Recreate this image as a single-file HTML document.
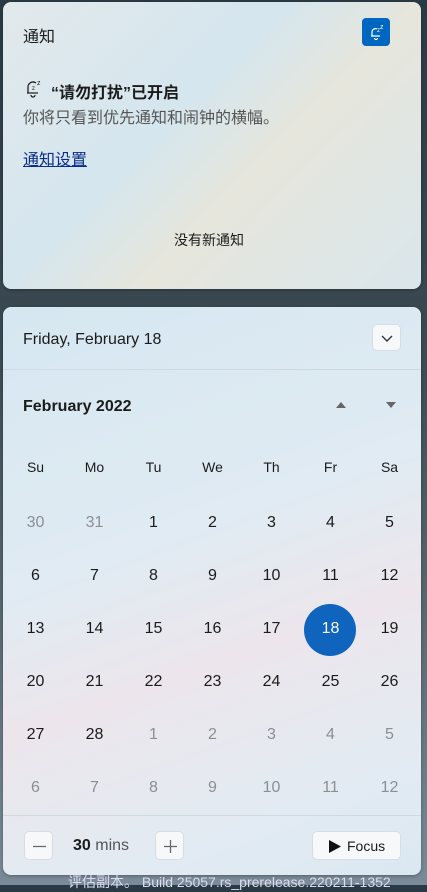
<!DOCTYPE html>
<html><head><meta charset="utf-8"><style>
*{margin:0;padding:0;box-sizing:border-box}
body{width:427px;height:885px;overflow:hidden;position:relative;font-family:"Liberation Sans","Noto Sans CJK SC",sans-serif;background:linear-gradient(180deg,#2a3a44 0%,#3c4a52 40%,#5a6a70 70%,#7a8a98 100%)}
.p{position:absolute;left:3px;width:418px;border-radius:8px;box-shadow:0 1px 3px rgba(0,0,0,.3)}
#n{top:2px;height:287px;background:linear-gradient(135deg,#e2e9ec 0%,#d5e6ee 40%,#e6e6dc 60%,#dae6ec 100%)}
#c{top:307px;height:568px;background:linear-gradient(160deg,#d6e7f1 0%,#e0ebf3 40%,#ece6ec 60%,#e2ebf3 85%,#dbe8f1 100%);overflow:hidden}
.t{position:absolute;white-space:nowrap}
.g{position:absolute;width:59px;text-align:center;font-size:16px;color:#1b1b1b}
.gray{color:#8a8f94}
.btn{position:absolute;background:#f6f8fa;border:1px solid #d8dde2;border-radius:5px}
</style></head><body>
<div class="p" id="n">
<div class="t" style="left:20px;top:21px;font-size:16px;color:#1b1b1b">通知</div>
<div style="position:absolute;left:359px;top:16px;width:28px;height:28px;background:#0067c0;border-radius:4px">
<svg width="28" height="28" viewBox="0 0 28 28"><path d="M9 18h9M10 18v-4a3.5 3.5 0 0 1 5-3M12.5 20a1.5 1.5 0 0 0 3 0" stroke="#fff" fill="none" stroke-width="1.2"/><text x="15" y="14" font-size="6" fill="#fff">z</text><text x="18" y="11" font-size="7" fill="#fff">z</text></svg></div>
<svg style="position:absolute;left:21px;top:75px" width="22" height="22" viewBox="0 0 22 22"><path d="M3 16h11M4 16v-6a5 5 0 0 1 8-4M7 18a2 2 0 0 0 4 0" stroke="#222" fill="none" stroke-width="1.3"/><text x="8" y="13" font-size="6" fill="#222">z</text><text x="13" y="8" font-size="7" fill="#222">z</text></svg>
<div class="t" style="left:48px;top:77px;font-size:16px;font-weight:bold;color:#1b1b1b">“请勿打扰”已开启</div>
<div class="t" style="left:20px;top:102px;font-size:16px;color:#555">你将只看到优先通知和闹钟的横幅。</div>
<div class="t" style="left:20px;top:144px;font-size:16px;color:#0a2c8c;text-decoration:underline">通知设置</div>
<div class="t" style="left:171px;top:228px;font-size:14px;color:#1b1b1b">没有新通知</div>
</div>
<div class="p" id="c">
<div class="t" style="left:20px;top:24px;font-size:16px;color:#1b1b1b">Friday, February 18</div>
<div class="btn" style="left:369px;top:17px;width:29px;height:27px"><svg width="29" height="27"><path d="M9 11l5 5 5-5" stroke="#333" fill="none" stroke-width="1.4"/></svg></div>
<div style="position:absolute;left:0;top:62px;width:418px;height:1px;background:#cfd9e0"></div>
<div class="t" style="left:20px;top:91px;font-size:16px;font-weight:bold;color:#1b1b1b">February 2022</div>
<svg style="position:absolute;left:332px;top:93px" width="12" height="10"><path d="M1 8L6 2L11 8Z" fill="#666"/></svg>
<svg style="position:absolute;left:382px;top:93px" width="12" height="10"><path d="M1 2L6 8L11 2Z" fill="#666"/></svg>
<div id="grid"></div>
<div style="position:absolute;left:0;top:508px;width:418px;height:1px;background:#cfd9e0"></div>
<div class="btn" style="left:21px;top:524px;width:29px;height:29px"><svg width="29" height="29"><path d="M8 14.5h13" stroke="#666" stroke-width="1.3"/></svg></div>
<div class="t" style="left:70px;top:530px;font-size:16px;color:#1b1b1b"><b>30</b> <span style="color:#555">mins</span></div>
<div class="btn" style="left:152px;top:524px;width:29px;height:29px"><svg width="29" height="29"><path d="M8 14.5h13M14.5 8v13" stroke="#666" stroke-width="1.3"/></svg></div>
<div class="btn" style="left:309px;top:524px;width:89px;height:29px"><svg style="position:absolute;left:16px;top:8px" width="12" height="13"><path d="M0 0L12 6.5L0 13Z" fill="#111"/></svg><span class="t" style="left:34px;top:6px;font-size:14px;color:#1b1b1b">Focus</span></div>
</div>
<div class="t" style="left:68px;top:872px;font-size:14px;color:#dde">评估副本。 Build 25057.rs_prerelease.220211-1352</div>
<script>
(function(){
var g=document.getElementById('grid'),h='',x0=3,
names=['Su','Mo','Tu','We','Th','Fr','Sa'];
for(var i=0;i<7;i++)h+='<div class="g" style="left:'+(x0+i*59)+'px;top:152px;font-size:14px">'+names[i]+'</div>';
var d=[30,31];for(var i=1;i<=28;i++)d.push(i);for(var i=1;i<=12;i++)d.push(i);
for(var k=0;k<42;k++){var r=Math.floor(k/7),c=k%7,gr=(k<2||k>=30);
var yy=207+r*53;
if(d[k]==18&&!gr){h+='<div style="position:absolute;left:'+(x0+c*59+3)+'px;top:'+(yy-16)+'px;width:52px;height:52px;border-radius:50%;background:#0f65be"></div><div class="g" style="left:'+(x0+c*59)+'px;top:'+yy+'px;color:#fff">18</div>';continue;}
h+='<div class="g'+(gr?' gray':'')+'" style="left:'+(x0+c*59)+'px;top:'+yy+'px">'+d[k]+'</div>';}
g.innerHTML=h;
})();
</script>
</body></html>
